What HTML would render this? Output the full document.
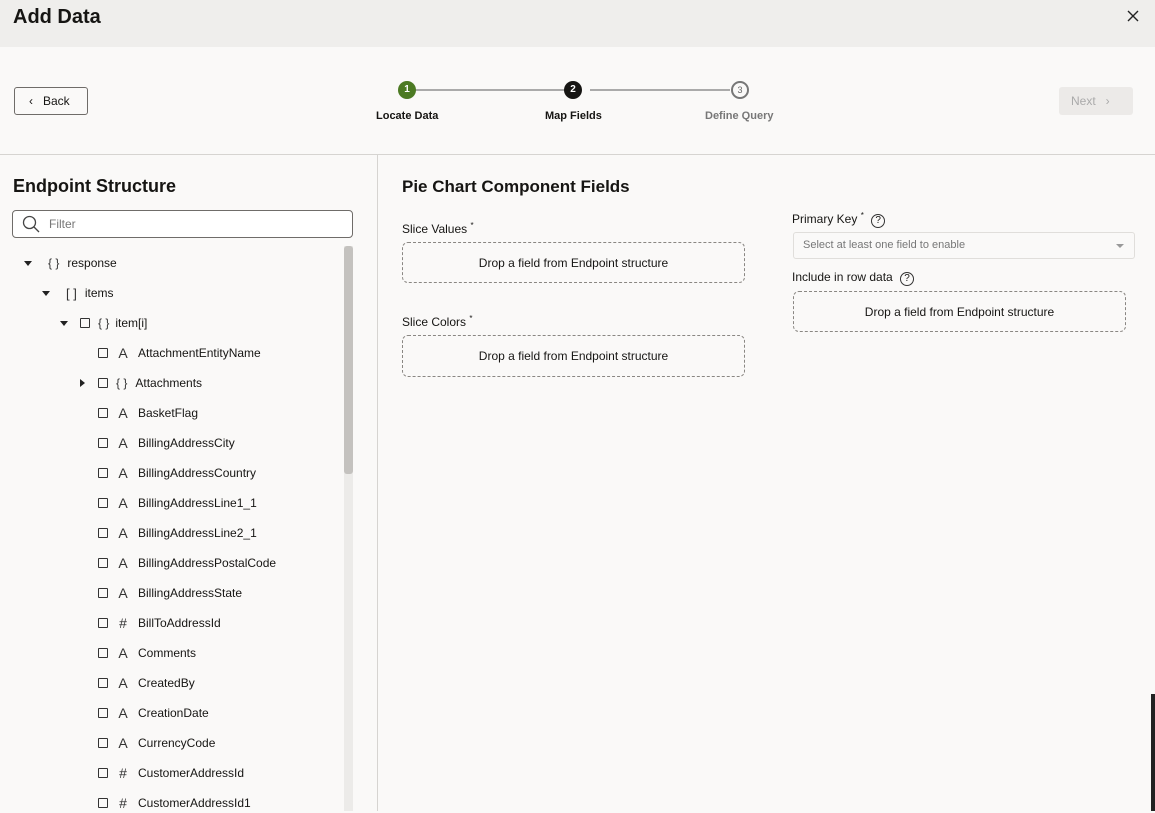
<!DOCTYPE html><html><head><style>
*{margin:0;padding:0;box-sizing:border-box}
body{width:1155px;height:811px;overflow:hidden;background:#faf9f8;font-family:"Liberation Sans",sans-serif;color:#161513;position:relative;font-size:12px}
.a{position:absolute;white-space:nowrap}
.hdr{left:0;top:0;width:1155px;height:47px;background:#efeeec}
.drop{position:absolute;border:1px dashed #8a8783;border-radius:6px;display:flex;align-items:center;justify-content:center;font-size:12px;color:#161513}
.row{position:absolute;height:20px;display:flex;align-items:center;font-size:12px;white-space:nowrap}
.row>*{flex-shrink:0}
.cb{width:10px;height:10px;border:1px solid #333;margin-right:8px;border-radius:1px}
.tri{width:0;height:0;border-left:4px solid transparent;border-right:4px solid transparent;border-top:5px solid #222}
.trr{width:0;height:0;border-top:4px solid transparent;border-bottom:4px solid transparent;border-left:5px solid #222}
.ic{width:14px;text-align:center;margin-right:8px;font-size:14px;color:#333}
</style></head><body>
<div class="a hdr"></div>
<div class="a" style="left:13px;top:6px;font-size:20px;font-weight:bold">Add Data</div>
<svg class="a" style="left:1127px;top:10px" width="12" height="12"><path d="M1 1L11 11M11 1L1 11" stroke="#222" stroke-width="1.4"/></svg>
<div class="a" style="left:14px;top:87px;width:74px;height:28px;border:1px solid #6f6c69;border-radius:3px;font-size:12px;line-height:26px;padding-left:14px">‹&nbsp;&nbsp;&nbsp;Back</div>
<div class="a" style="left:1059px;top:87px;width:74px;height:28px;background:#eceae8;border-radius:3px;font-size:12px;line-height:28px;padding-left:12px;color:#aaa">Next&nbsp;&nbsp;&nbsp;›</div>
<div class="a" style="left:415px;top:89px;width:150px;height:2px;background:#aaa"></div>
<div class="a" style="left:590px;top:89px;width:140px;height:2px;background:#aaa"></div>
<div class="a" style="left:398px;top:81px;width:18px;height:18px;border-radius:50%;background:#4c7a23;color:#fff;font-size:10px;font-weight:bold;text-align:center;line-height:18px">1</div>
<div class="a" style="left:564px;top:81px;width:18px;height:18px;border-radius:50%;background:#161513;color:#fff;font-size:10px;font-weight:bold;text-align:center;line-height:18px">2</div>
<div class="a" style="left:731px;top:81px;width:18px;height:18px;border-radius:50%;border:2px solid #777;color:#666;font-size:9px;text-align:center;line-height:14px">3</div>
<div class="a" style="left:376px;top:110px;font-size:11px;font-weight:bold">Locate Data</div>
<div class="a" style="left:545px;top:110px;font-size:11px;font-weight:bold">Map Fields</div>
<div class="a" style="left:705px;top:110px;font-size:11px;font-weight:bold;color:#777">Define Query</div>
<div class="a" style="left:0;top:154px;width:1155px;height:1px;background:#d6d4d1"></div>
<div class="a" style="left:377px;top:155px;width:1px;height:656px;background:#d6d4d1"></div>
<div class="a" style="left:13px;top:176px;font-size:18px;font-weight:bold">Endpoint Structure</div>
<div class="a" style="left:12px;top:210px;width:341px;height:28px;border:1px solid #6f6c69;border-radius:4px;background:#fff"></div>
<svg class="a" style="left:22px;top:215px" width="18" height="18"><circle cx="7.5" cy="7.5" r="6" fill="none" stroke="#444" stroke-width="1.3"/><path d="M12 12l5 5" stroke="#444" stroke-width="1.3"/></svg>
<div class="a" style="left:49px;top:217px;font-size:12px;color:#777">Filter</div>
<div class="a" style="left:344px;top:246px;width:9px;height:565px;background:#ecebe9"></div>
<div class="a" style="left:344px;top:246px;width:9px;height:228px;background:#c4c2bf;border-radius:3px"></div>

<div class="row" style="left:24px;top:253px"><div class="tri" style="margin-right:16px"></div><div class="ic" style="width:auto;margin-right:8px;font-size:12px">{ }</div>response</div>
<div class="row" style="left:42px;top:283px"><div class="tri" style="margin-right:16px"></div><div class="ic" style="width:auto;margin-right:8px;font-size:13px">[ ]</div>items</div>
<div class="row" style="left:60px;top:313px"><div class="tri" style="margin-right:12px"></div><div class="cb"></div><div class="ic" style="width:auto;margin-right:6px;font-size:12px">{ }</div>item[i]</div>
<div style="position:absolute;left:98px;top:343px">
<div class="row" style="top:0"><div class="cb"></div><div class="ic">A</div>AttachmentEntityName</div>
<div class="row" style="top:30px;left:-18px"><div class="trr" style="margin-right:13px"></div><div class="cb"></div><div class="ic" style="width:auto;font-size:12px">{ }</div>Attachments</div>
<div class="row" style="top:60px"><div class="cb"></div><div class="ic">A</div>BasketFlag</div>
<div class="row" style="top:90px"><div class="cb"></div><div class="ic">A</div>BillingAddressCity</div>
<div class="row" style="top:120px"><div class="cb"></div><div class="ic">A</div>BillingAddressCountry</div>
<div class="row" style="top:150px"><div class="cb"></div><div class="ic">A</div>BillingAddressLine1_1</div>
<div class="row" style="top:180px"><div class="cb"></div><div class="ic">A</div>BillingAddressLine2_1</div>
<div class="row" style="top:210px"><div class="cb"></div><div class="ic">A</div>BillingAddressPostalCode</div>
<div class="row" style="top:240px"><div class="cb"></div><div class="ic">A</div>BillingAddressState</div>
<div class="row" style="top:270px"><div class="cb"></div><div class="ic">#</div>BillToAddressId</div>
<div class="row" style="top:300px"><div class="cb"></div><div class="ic">A</div>Comments</div>
<div class="row" style="top:330px"><div class="cb"></div><div class="ic">A</div>CreatedBy</div>
<div class="row" style="top:360px"><div class="cb"></div><div class="ic">A</div>CreationDate</div>
<div class="row" style="top:390px"><div class="cb"></div><div class="ic">A</div>CurrencyCode</div>
<div class="row" style="top:420px"><div class="cb"></div><div class="ic">#</div>CustomerAddressId</div>
<div class="row" style="top:450px"><div class="cb"></div><div class="ic">#</div>CustomerAddressId1</div>
</div>

<div class="a" style="left:402px;top:177px;font-size:17px;font-weight:bold">Pie Chart Component Fields</div>
<div class="a" style="left:402px;top:221px;font-size:12px">Slice Values <sup style="font-size:8px">*</sup></div>
<div class="drop" style="left:402px;top:242px;width:343px;height:41px">Drop a field from Endpoint structure</div>
<div class="a" style="left:402px;top:314px;font-size:12px">Slice Colors <sup style="font-size:8px">*</sup></div>
<div class="drop" style="left:402px;top:335px;width:343px;height:42px">Drop a field from Endpoint structure</div>
<div class="a" style="left:792px;top:211px;font-size:12px">Primary Key <sup style="font-size:8px">*</sup> <span style="display:inline-block;width:14px;height:14px;border:1px solid #333;border-radius:50%;font-size:10px;text-align:center;line-height:12px;margin-left:4px">?</span></div>
<div class="a" style="left:793px;top:232px;width:342px;height:27px;border:1px solid #e0dedb;border-radius:3px;font-size:11px;color:#777;line-height:25px;padding-left:9px">Select at least one field to enable</div>
<div class="a" style="left:1116px;top:244px;border-left:4px solid transparent;border-right:4px solid transparent;border-top:4px solid #999"></div>
<div class="a" style="left:792px;top:270px;font-size:12px">Include in row data <span style="display:inline-block;width:14px;height:14px;border:1px solid #333;border-radius:50%;font-size:10px;text-align:center;line-height:12px;margin-left:4px">?</span></div>
<div class="drop" style="left:793px;top:291px;width:333px;height:41px">Drop a field from Endpoint structure</div>
<div class="a" style="left:1151px;top:694px;width:4px;height:117px;background:#222"></div>
</body></html>
